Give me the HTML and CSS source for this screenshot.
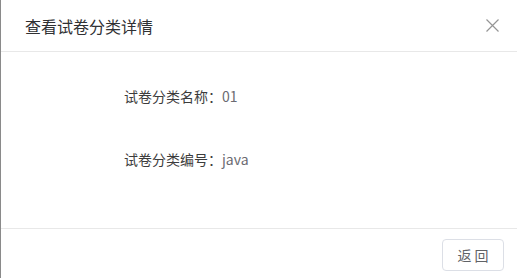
FILE: index.html
```html
<!DOCTYPE html>
<html lang="zh-CN">
<head>
<meta charset="utf-8">
<title>查看试卷分类详情</title>
<link rel="stylesheet" href="styles.css">
</head>
<body>
<div class="dialog">
  <div class="header">
    <span class="title">查看试卷分类详情</span>
    <span class="close" aria-label="关闭">
      <svg width="13" height="13" viewBox="0 0 13 13"><path d="M0.5 0.5 L12.5 12.5 M12.5 0.5 L0.5 12.5" stroke="#959595" stroke-width="1.2" fill="none"/></svg>
    </span>
  </div>
  <div class="content">
    <div class="row"><span class="label">试卷分类名称：</span><span class="value">01</span></div>
    <div class="row"><span class="label">试卷分类编号：</span><span class="value">java</span></div>
  </div>
  <div class="footer">
    <button class="btn">返 回</button>
  </div>
</div>
</body>
</html>
```
FILE: styles.css
```css
html, body {
  margin: 0;
  padding: 0;
  background: #ffffff;
}
body {
  font-family: "Noto Sans CJK SC", "Open Sans", sans-serif;
}
.dialog {
  height: 278px;
  box-sizing: border-box;
  border-left: 1px solid #8a8a8a;
  display: flex;
  flex-direction: column;
  background: #fff;
}
.header {
  height: 51px;
  flex: none;
  border-bottom: 1px solid #e8e8e8;
  display: flex;
  align-items: center;
  justify-content: space-between;
  padding: 0 18px 0 24px;
}
.title {
  font-size: 16px;
  line-height: 20px;
  color: #303133;
}
.close {
  display: flex;
  width: 13px;
  height: 13px;
}
.content {
  flex: 1;
  padding: 34px 0 0 123px;
  display: flex;
  flex-direction: column;
  gap: 43px;
}
.row {
  font-size: 14px;
  line-height: 20px;
  height: 20px;
}
.label {
  color: #3c3c3c;
}
.value {
  color: #6b6b72;
}
.footer {
  flex: none;
  height: 50px;
  box-sizing: border-box;
  border-top: 1px solid #e8e8e8;
  display: flex;
  justify-content: flex-end;
  align-items: flex-start;
  padding: 10px 13px 0 0;
}
.btn {
  width: 62px;
  height: 32px;
  border: 1px solid #dcdfe6;
  border-radius: 4px;
  background: #fff;
  font-family: "Noto Sans CJK SC", sans-serif;
  font-size: 14px;
  color: #606266;
  padding: 0;
  cursor: pointer;
}
```
